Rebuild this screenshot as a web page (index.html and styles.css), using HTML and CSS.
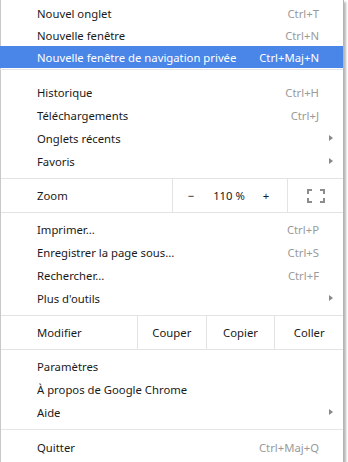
FILE: index.html
```html
<!DOCTYPE html>
<html lang="fr">
<head>
  <meta charset="UTF-8" />
  <title>Menu Chrome</title>
  <link rel="stylesheet" href="styles.css">
</head>
<body>
  <div class="menu">
    <div class="group first">
      <div class="item"><span class="label">Nouvel onglet</span><span class="key">Ctrl+T</span></div>
      <div class="item"><span class="label">Nouvelle fenêtre</span><span class="key">Ctrl+N</span></div>
      <div class="item active"><span class="label">Nouvelle fenêtre de navigation privée</span><span class="key">Ctrl+Maj+N</span></div>
    </div>
    <div class="sep"></div>
    <div class="group">
      <div class="item"><span class="label">Historique</span><span class="key">Ctrl+H</span></div>
      <div class="item"><span class="label">Téléchargements</span><span class="key">Ctrl+J</span></div>
      <div class="item sub"><span class="label">Onglets récents</span><span class="arrow"></span></div>
      <div class="item sub"><span class="label">Favoris</span><span class="arrow"></span></div>
    </div>

    <!-- ligne zoom -->
    <div class="split">
      <span class="split-label">Zoom</span>
      <div class="zoom-ctrl">
        <span>−</span>
        <span>110 %</span>
        <span>+</span>
      </div>
      <div class="zoom-full">
        <svg width="18" height="14" viewBox="0 0 18 14" fill="none" stroke="#8c8c8c" stroke-width="2">
          <path d="M1 5V1h4M13 1h4v4M17 9v4h-4M5 13H1V9" />
        </svg>
      </div>
    </div>

    <div class="group">
      <div class="item"><span class="label">Imprimer...</span><span class="key">Ctrl+P</span></div>
      <div class="item"><span class="label">Enregistrer la page sous...</span><span class="key">Ctrl+S</span></div>
      <div class="item"><span class="label">Rechercher...</span><span class="key">Ctrl+F</span></div>
      <div class="item sub"><span class="label">Plus d'outils</span><span class="arrow"></span></div>
    </div>

    <!-- ligne modifier -->
    <div class="split edit">
      <span class="split-label">Modifier</span>
      <div class="edit-btn">Couper</div>
      <div class="edit-btn">Copier</div>
      <div class="edit-btn">Coller</div>
    </div>

    <div class="group">
      <div class="item"><span class="label">Paramètres</span></div>
      <div class="item"><span class="label">À propos de Google Chrome</span></div>
      <div class="item sub"><span class="label">Aide</span><span class="arrow"></span></div>
    </div>
    <div class="sep last"></div>
    <div class="group">
      <div class="item quit"><span class="label">Quitter</span><span class="key">Ctrl+Maj+Q</span></div>
    </div>
  </div>
</body>
</html>
```

FILE: styles.css
```css
body {
  margin: 0;
  background: #fff;
  font-family: "Noto Sans", "Open Sans", sans-serif;
  font-size: 11.3px;
  color: #1a1a1a;
}

.menu {
  width: 342px;
  background: #fff;
  border-left: 1px solid #c8c8c8;
  border-right: 1px solid #b4b4b4;
  border-bottom: 1px solid #b4b4b4;
  box-shadow: 2px 2px 2px rgba(0, 0, 0, 0.28);
}

.group {
  padding: 5px 0;
}

.group.first {
  padding: 2px 0 0;
  margin-left: -1px;
}

.item {
  display: flex;
  align-items: center;
  height: 23px;
  padding: 0 24px 0 36px;
  position: relative;
}

.group.first .item {
  height: 22px;
  padding-left: 37px;
}

.item.quit {
  height: 22px;
}

.item .label {
  flex: 1;
  white-space: nowrap;
}

.item .key {
  color: #9a9a9a;
}

.item.active {
  background: #4a86e8;
  color: #fff;
}

.item.active .key {
  color: #fff;
}

/* petit triangle des sous-menus */
.arrow {
  position: absolute;
  right: 10px;
  top: 8px;
  width: 0;
  height: 0;
  border-top: 3.5px solid transparent;
  border-bottom: 3.5px solid transparent;
  border-left: 4px solid #888;
}

.sep {
  height: 1px;
  background: #e6e6e6;
  margin: 6px 0;
}

.group.first + .sep {
  margin-left: -1px;
}

.group + .sep {
  margin-top: 1px;
}

.sep.last {
  margin: 0 0 1px;
}

.split {
  display: flex;
  height: 33px;
  border-top: 1px solid #e3e3e3;
  border-bottom: 1px solid #e3e3e3;
}

.split-label {
  width: 135px;
  padding-left: 36px;
  line-height: 33px;
}

.zoom-ctrl {
  width: 114px;
  border-left: 1px solid #e3e3e3;
  display: grid;
  grid-template-columns: 36px 40px 34px;
  align-items: center;
  text-align: center;
}

.zoom-full {
  flex: 1;
  border-left: 1px solid #e3e3e3;
  display: flex;
  align-items: center;
  justify-content: center;
}

.edit .split-label {
  width: 100px;
}

.edit-btn {
  flex: 1;
  border-left: 1px solid #e3e3e3;
  display: flex;
  align-items: center;
  justify-content: center;
}
```
